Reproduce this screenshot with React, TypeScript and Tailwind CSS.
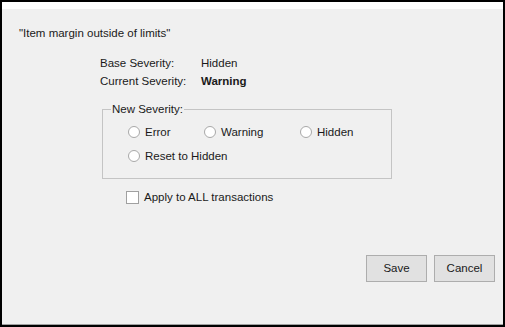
export default function App() {
  const font = { fontFamily: '"Liberation Sans", Arial, sans-serif' };
  const radio = (label: string, w: string) => (
    <label className={`flex items-center gap-[5px] ${w}`}>
      <span className="w-[12px] h-[12px] rounded-full border border-[#a8a8a8] bg-white" />
      <span>{label}</span>
    </label>
  );
  return (
    <div className="w-[505px] h-[327px] bg-black pt-[2px] pl-[2px] pr-[2px] pb-[2px]" style={font}>
      <div className="h-full flex flex-col bg-white">
        <div className="h-[7px] bg-white" />
        <div className="flex-1 flex flex-col bg-[#f0f0f0] border-b border-[#a0a0a0] text-[11.5px] leading-[15px] text-[#1a1a1a]">
          <div className="pl-[17px] pt-[17px]">"Item margin outside of limits"</div>
          <div className="pl-[98px] pt-[15px] flex flex-col gap-[3px]">
            <div className="flex">
              <span className="w-[101px]">Base Severity:</span>
              <span>Hidden</span>
            </div>
            <div className="flex">
              <span className="w-[101px]">Current Severity:</span>
              <span className="font-bold">Warning</span>
            </div>
          </div>
          <fieldset className="ml-[100px] mt-[14px] w-[290px] h-[76px] border border-[#c4c4c4] px-0 pb-0 pt-[9px]">
            <legend className="ml-[8px] px-[1px] leading-[12px]">New Severity:</legend>
            <div className="pl-[25px]">
              <div className="flex items-center h-[16px]">
                {radio('Error', 'w-[76px]')}
                {radio('Warning', 'w-[96px]')}
                {radio('Hidden', '')}
              </div>
              <div className="flex items-center h-[16px] mt-[8px]">{radio('Reset to Hidden', '')}</div>
            </div>
          </fieldset>
          <label className="ml-[124px] mt-[11px] flex items-center gap-[5px]">
            <span className="w-[13px] h-[13px] border border-[#a0a0a0] bg-white" />
            <span>Apply to ALL transactions</span>
          </label>
          <div className="flex-1" />
          <div className="flex justify-end gap-[7px] pr-[8px] pb-[42px]">
            <button className="w-[61px] h-[27px] bg-[#e1e1e1] border border-[#adadad] text-[11.5px]">Save</button>
            <button className="w-[61px] h-[27px] bg-[#e1e1e1] border border-[#adadad] text-[11.5px]">Cancel</button>
          </div>
        </div>
      </div>
    </div>
  );
}
